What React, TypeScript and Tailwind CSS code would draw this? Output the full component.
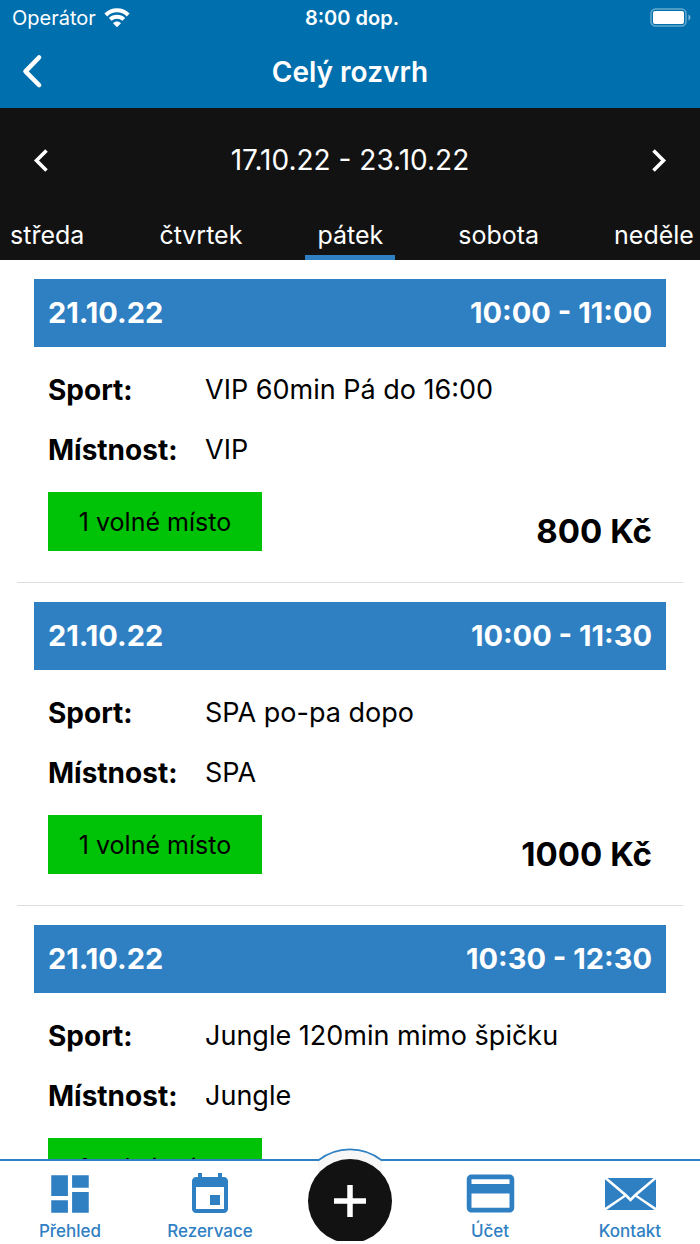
import React from "react";

type Lesson = {
  date: string;
  time: string;
  sport: string;
  room: string;
  free: string;
  price?: string;
};

const days = ["středa", "čtvrtek", "pátek", "sobota", "neděle"];

const lessons: Lesson[] = [
  { date: "21.10.22", time: "10:00 - 11:00", sport: "VIP 60min Pá do 16:00", room: "VIP", free: "1 volné místo", price: "800 Kč" },
  { date: "21.10.22", time: "10:00 - 11:30", sport: "SPA po-pa dopo", room: "SPA", free: "1 volné místo", price: "1000 Kč" },
  { date: "21.10.22", time: "10:30 - 12:30", sport: "Jungle 120min mimo špičku", room: "Jungle", free: "1 volné místo" },
];

function StatusBar() {
  return (
    <div className="grid h-9 grid-cols-3 items-center pl-3 pr-2 text-[20px] leading-6">
      <div className="flex items-center gap-2">
        <span>Operátor</span>
        <svg width="26" height="20" viewBox="0 0 26 20" fill="none" stroke="currentColor" strokeWidth="4">
          <path d="M1.800 7C8 0.800 18 0.800 24.200 7" />
          <path d="M6.200 11.400c3.800-3.600 9.800-3.600 13.600 0" />
          <path d="M13 19.200l-4-4c2.200-2.200 5.800-2.200 8 0z" fill="currentColor" stroke="none" />
        </svg>
      </div>
      <span className="text-center font-semibold">8:00 dop.</span>
      <svg className="justify-self-end" width="42" height="20" viewBox="0 0 42 20">
        <rect x="1" y="1" width="35" height="17" rx="4.500" fill="none" stroke="#fff" strokeOpacity="0.4" strokeWidth="1.500" />
        <rect x="3" y="3" width="31" height="13" rx="2" fill="#fff" />
        <path d="M38.500 6.500c2.500 1 2.500 5 0 6z" fill="#fff" fillOpacity="0.5" />
      </svg>
    </div>
  );
}

function Header() {
  return (
    <header className="bg-[#006fae] text-white">
      <StatusBar />
      <div className="grid h-[72px] grid-cols-[64px_1fr_64px] items-center">
        <button aria-label="Zpět" className="flex h-full items-center pl-5">
          <svg width="24" height="36" viewBox="0 0 24 36" fill="none" stroke="currentColor" strokeWidth="4.600" strokeLinecap="round" strokeLinejoin="round">
            <path d="M19 3.500L5.500 17.300 19 31" />
          </svg>
        </button>
        <h1 className="text-center text-[28px] font-semibold leading-9">Celý rozvrh</h1>
      </div>
    </header>
  );
}

function WeekPicker() {
  return (
    <section className="overflow-hidden bg-[#121212] text-white">
      <div className="flex h-[104px] items-center justify-between px-7">
        <button aria-label="Předchozí týden" className="p-1">
          <svg width="18" height="24" viewBox="0 0 18 24" fill="none" stroke="currentColor" strokeWidth="3.600">
            <path d="M14.500 2.500L4.500 12.500l10 10" />
          </svg>
        </button>
        <span className="text-[28px] leading-9">17.10.22 - 23.10.22</span>
        <button aria-label="Další týden" className="p-1">
          <svg width="18" height="24" viewBox="0 0 18 24" fill="none" stroke="currentColor" strokeWidth="3.600">
            <path d="M3.500 2.500l10 10-10 10" />
          </svg>
        </button>
      </div>
      <div className="flex h-12 justify-center gap-[51px] pl-1">
        {days.map((day) => (
          <button
            key={day}
            className={
              day === "pátek"
                ? "shrink-0 border-b-5 border-[#2f80c3] px-3 pt-0.5 text-[25px] leading-8"
                : "shrink-0 border-b-5 border-transparent px-3 pt-0.5 text-[25px] leading-8"
            }
          >
            {day}
          </button>
        ))}
      </div>
    </section>
  );
}

function LessonCard({ lesson }: { lesson: Lesson }) {
  return (
    <article className="mx-[17px] border-b border-[#dcdcdc] px-[17px] pb-[31px] pt-[19px]">
      <div className="flex h-[68px] items-center justify-between bg-[#2f80c3] px-[14px] text-[29px] font-bold text-white">
        <span>{lesson.date}</span>
        <span>{lesson.time}</span>
      </div>
      <dl className="mt-[13px] grid grid-cols-[157px_1fr] px-[14px] leading-[60px]">
        <dt className="text-[28px] font-bold">Sport:</dt>
        <dd className="text-[27px]">{lesson.sport}</dd>
        <dt className="text-[28px] font-bold">Místnost:</dt>
        <dd className="text-[27px]">{lesson.room}</dd>
      </dl>
      <div className="mt-3 flex items-end justify-between px-[14px]">
        <button className="h-[59px] w-[214px] bg-[#00c206] pt-0.5 text-[25px]">{lesson.free}</button>
        {lesson.price && <span className="text-[33px] font-bold leading-10">{lesson.price}</span>}
      </div>
    </article>
  );
}

function NavItem({ label, children }: { label: string; children: React.ReactNode }) {
  return (
    <a href="#" className="flex flex-col items-center pt-1 text-[17px] font-medium leading-[18px]">
      <span className="flex h-[57px] items-center">{children}</span>
      {label}
    </a>
  );
}

function BottomNav() {
  return (
    <nav className="grid h-[85px] shrink-0 grid-cols-5 border-t-2 border-[#2f80c3] bg-white text-[#2f80c3]">
      <NavItem label="Přehled">
        <svg width="50" height="50" viewBox="0 0 24 24" fill="currentColor">
          <path d="M3 13h8V3H3v10zm0 8h8v-6H3v6zm10 0h8V11h-8v10zm0-18v6h8V3h-8z" />
        </svg>
      </NavItem>
      <NavItem label="Rezervace">
        <svg width="48" height="48" viewBox="0 -0.5 24 24" fill="currentColor">
          <path d="M17 12h-5v5h5v-5z" />
          <path d="M19 3h-1V1h-2v2H8V1H6v2H5c-1.110 0-1.990.9-1.990 2L3 19c0 1.100.89 2 2 2h14c1.100 0 2-.9 2-2V5c0-1.100-.9-2-2-2zm0 16H5V8h14v11z" />
        </svg>
      </NavItem>
      <div className="relative flex justify-center">
        {/* bump in the bar behind the add button */}
        <svg className="absolute -top-[13px]" width="66" height="40" viewBox="0 0 66 40">
          <path d="M1 13C20-2 46-2 65 13v27H1z" fill="#f7f7f7" />
          <path d="M1 12.500C20-2.300 46-2.300 65 12.500" fill="none" stroke="#2f80c3" strokeWidth="1.600" />
        </svg>
        <div className="relative -mt-0.5 h-[82px] overflow-hidden">
          <button aria-label="Přidat" className="flex size-[84px] items-center justify-center rounded-full bg-[#121212] text-white">
            <svg width="32" height="32" viewBox="0 0 32 32" fill="none" stroke="currentColor" strokeWidth="5.500">
              <path d="M16 0v32M0 16h32" />
            </svg>
          </button>
        </div>
      </div>
      <NavItem label="Účet">
        <svg width="57" height="57" viewBox="0 0 24 24" fill="currentColor">
          <path d="M20 4H4c-1.110 0-1.990.89-1.990 2L2 18c0 1.110.89 2 2 2h16c1.110 0 2-.89 2-2V6c0-1.110-.89-2-2-2zm0 14H4v-6h16v6zm0-10H4V6h16v2z" />
        </svg>
      </NavItem>
      <NavItem label="Kontakt">
        <svg width="51" height="32" viewBox="0 0 51 32" fill="currentColor">
          <path d="M2.500 0h46L29.800 15.800l-4.300 4.200-4.300-4.200z" />
          <path d="M0 1.200L18.800 17.200 0 29.800z" />
          <path d="M51 1.200L32.200 17.200 51 29.800z" />
          <path d="M1.500 32l19-13.200 5 5 5-5L49.500 32z" />
        </svg>
      </NavItem>
    </nav>
  );
}

function App() {
  return (
    <div className="flex h-screen w-full flex-col bg-white font-['Inter',sans-serif] text-black">
      <Header />
      <WeekPicker />
      <main className="min-h-0 flex-1 overflow-hidden">
        {lessons.map((lesson) => (
          <LessonCard key={lesson.time} lesson={lesson} />
        ))}
      </main>
      <BottomNav />
    </div>
  );
}

export default App;
